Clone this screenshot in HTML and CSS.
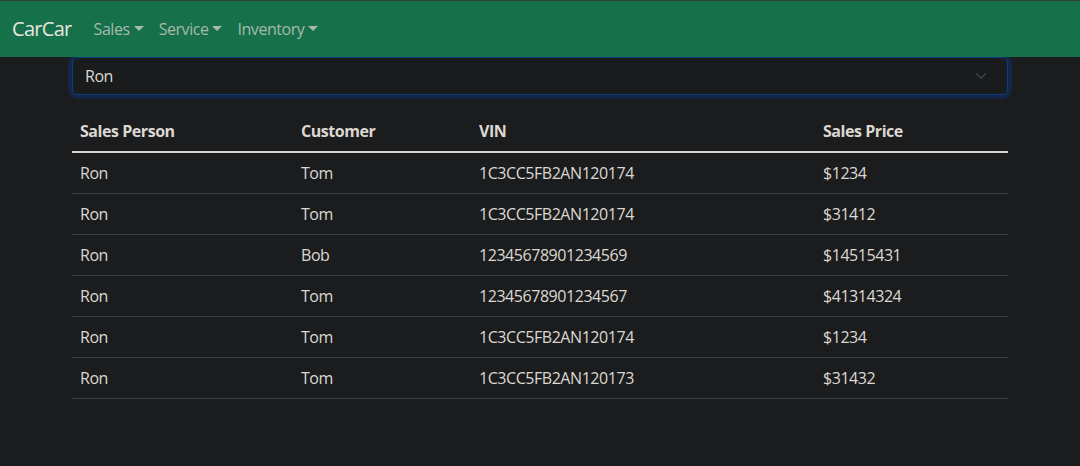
FILE: index.html
```html
<!DOCTYPE html>
<html lang="en">
<head>
<meta charset="utf-8">
<title>CarCar</title>
<link rel="stylesheet" href="styles.css">
</head>
<body>
<nav class="navbar">
  <a class="brand" href="#">CarCar</a>
  <ul class="nav">
    <li><a class="nav-link dropdown" href="#">Sales</a></li>
    <li><a class="nav-link dropdown" href="#">Service</a></li>
    <li><a class="nav-link dropdown" href="#">Inventory</a></li>
  </ul>
</nav>
<main class="container">
  <div class="select">
    <span>Ron</span>
    <svg class="chevron" viewBox="0 0 16 16" width="16" height="12"><path d="M2 5l6 6 6-6" fill="none" stroke="#3c4246" stroke-width="2" stroke-linecap="round" stroke-linejoin="round"/></svg>
  </div>
  <table class="table">
    <colgroup>
      <col class="c1"><col class="c2"><col class="c3"><col class="c4">
    </colgroup>
    <thead>
      <tr><th>Sales Person</th><th>Customer</th><th>VIN</th><th>Sales Price</th></tr>
    </thead>
    <tbody>
      <tr><td>Ron</td><td>Tom</td><td>1C3CC5FB2AN120174</td><td>$1234</td></tr>
      <tr><td>Ron</td><td>Tom</td><td>1C3CC5FB2AN120174</td><td>$31412</td></tr>
      <tr><td>Ron</td><td>Bob</td><td>12345678901234569</td><td>$14515431</td></tr>
      <tr><td>Ron</td><td>Tom</td><td>12345678901234567</td><td>$41314324</td></tr>
      <tr><td>Ron</td><td>Tom</td><td>1C3CC5FB2AN120174</td><td>$1234</td></tr>
      <tr><td>Ron</td><td>Tom</td><td>1C3CC5FB2AN120173</td><td>$31432</td></tr>
    </tbody>
  </table>
</main>
</body>
</html>
```

FILE: styles.css
```css
* { box-sizing: border-box; }
html, body { margin: 0; padding: 0; }
body {
  background: #1b1c1e;
  color: #dcd8d1;
  font-family: "Open Sans", "Liberation Sans", sans-serif;
  font-size: 16px;
  line-height: 24px;
  letter-spacing: -0.45px;
  height: 466px;
  overflow: hidden;
}
.navbar {
  position: relative;
  z-index: 2;
  display: flex;
  align-items: center;
  height: 57px;
  border-top: 1px solid #383b3e;
  background: #167049;
  padding: 0 12px;
}
.brand {
  color: #e8e6e3;
  font-size: 20px;
  line-height: 30px;
  letter-spacing: -0.7px;
  text-decoration: none;
  margin-right: 15px;
  padding: 5px 0;
}
.nav { display: flex; list-style: none; margin: 0; padding: 0; }
.nav-link {
  display: flex;
  align-items: center;
  padding: 8px 8px 8px 7px;
  color: #a6b9ad;
  text-decoration: none;
}
.dropdown::after {
  content: "";
  display: inline-block;
  margin-left: 4px;
  border-top: 5px solid #a6b9ad;
  border-left: 5px solid transparent;
  border-right: 5px solid transparent;
  margin-top: -2px;
}
.container {
  width: 960px;
  margin: 0 auto;
  padding: 0 12px;
}
.select {
  position: relative;
  z-index: 1;
  display: flex;
  align-items: center;
  justify-content: space-between;
  height: 38px;
  padding: 0 18px 0 12px;
  border: 1px solid #0c3b7e;
  border-radius: 6px;
  background: #191b1c;
  box-shadow: 0 0 0 4px #13264a;
  color: #dcd8d1;
  margin-bottom: 16px;
}
.select span { line-height: 24px; }
.table {
  width: 100%;
  border-collapse: collapse;
  table-layout: fixed;
}
.c1 { width: 221px; }
.c2 { width: 178px; }
.c3 { width: 344px; }
.c4 { width: 193px; }
.table th {
  text-align: left;
  font-weight: 700;
  padding: 8px;
  line-height: 24px;
  color: #dcd8d1;
  border-bottom: 2px solid #d8d4cb;
}
.table td {
  padding: 8px;
  line-height: 24px;
  border-bottom: 1px solid #3a3e41;
}
```
